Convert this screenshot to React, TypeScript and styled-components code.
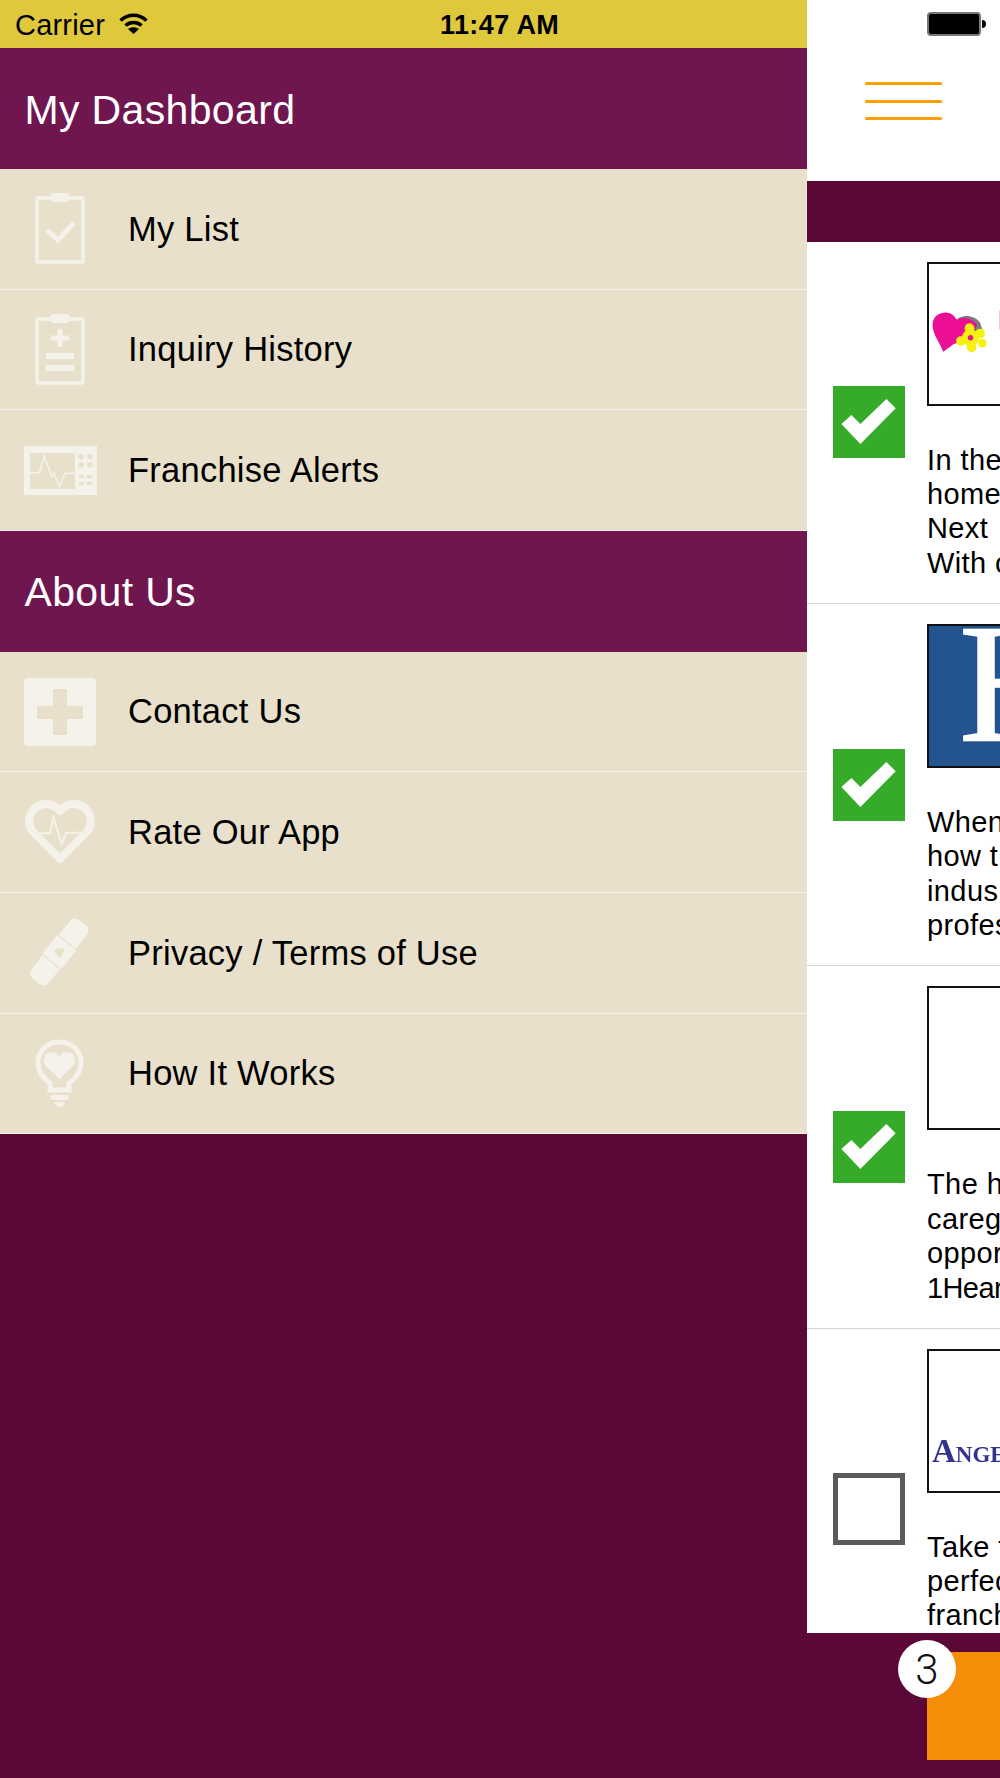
import React, { ReactElement } from "react";
import styled, { createGlobalStyle } from "styled-components";

const ICON = "#f5f2ec";

const GlobalStyle = createGlobalStyle`
	html, body {
		margin: 0;
		padding: 0;
		background: #5b0837;
		font-family: "Liberation Sans", Arial, sans-serif;
	}
`;

// menu icons are all drawn on the same 74x74 box so they line up in the column
const ClipboardFrame = () => (
	<>
		<rect x="13" y="6" width="46" height="64" rx="1.5" fill="none" stroke={ICON} strokeWidth="3.5" />
		<rect x="27" y="1" width="18" height="9" rx="2" fill={ICON} />
	</>
);

const ListIcon = () => (
	<MenuSvg viewBox="0 0 74 74">
		<ClipboardFrame />
		<path d="M23 38 L34 48 L50 31" fill="none" stroke={ICON} strokeWidth="5" />
	</MenuSvg>
);

const HistoryIcon = () => (
	<MenuSvg viewBox="0 0 74 74">
		<ClipboardFrame />
		<path d="M27 22.5 H45 V27.5 H27 Z M33.5 16 H38.5 V34 H33.5 Z" fill={ICON} />
		<rect x="22" y="40" width="28" height="6" fill={ICON} />
		<rect x="22" y="52" width="28" height="6" fill={ICON} />
	</MenuSvg>
);

const MonitorIcon = () => (
	<MenuSvg viewBox="0 0 74 74">
		<path fillRule="evenodd" fill={ICON} d="M0 12 H73 V61 H0 Z M6 19 V55 H51 V19 Z" />
		<path
			d="M6 38.7 H15.3 L20.3 22 L27.7 42.7 L30 39 L35.3 52.7 L41 39.3 H51"
			fill="none"
			stroke={ICON}
			strokeWidth="1.6"
		/>
		<circle cx="57" cy="22.7" r="2.7" fill="#e8e0cb" />
		<circle cx="66" cy="22.7" r="2.7" fill="#e8e0cb" />
		<circle cx="57" cy="31" r="2.7" fill="#e8e0cb" />
		<circle cx="66" cy="31" r="2.7" fill="#e8e0cb" />
		<path
			d="M55 41 H60 V44.3 H55 Z M62.7 41 H68.3 V44.3 H62.7 Z M55 47.7 H60 V51 H55 Z M62.7 47.7 H68.3 V51 H62.7 Z"
			fill="#e8e0cb"
		/>
	</MenuSvg>
);

const CrossIcon = () => (
	<MenuSvg viewBox="0 0 74 74">
		<path
			fillRule="evenodd"
			fill={ICON}
			d="M4 3 H68 Q72 3 72 7 V67 Q72 71 68 71 H4 Q0 71 0 67 V7 Q0 3 4 3 Z M29 14 V31 H13 V44 H29 V60 H43 V44 H59 V31 H43 V14 Z"
		/>
	</MenuSvg>
);

const HeartIcon = () => (
	<MenuSvg viewBox="0 0 74 74">
		<path
			d="M36 63 L8.500 35.500 A17 17 0 0 1 36 15 A17 17 0 0 1 63.500 35.500 Z"
			fill="none"
			stroke={ICON}
			strokeWidth="8"
			strokeLinejoin="round"
		/>
		<path
			d="M11 37.300 H26 L29.300 21.300 L37.700 48 L42 36.700 H61"
			fill="none"
			stroke={ICON}
			strokeWidth="2"
		/>
	</MenuSvg>
);

const BandageIcon = () => (
	<MenuSvg viewBox="0 0 74 74">
		<g transform="rotate(38.5 35.3 36)">
			<rect x="24.3" y="-1.5" width="22" height="75" rx="7" fill={ICON} />
			<rect x="23" y="23.5" width="24.6" height="25" fill={ICON} />
			<path d="M23 23.5 H47.6 M23 48.5 H47.6" stroke="#e8e0cb" strokeWidth="1.2" />
		</g>
		<path d="M35.3 42 L31 36 Q31 32 33.5 32 Q35 32 35.5 33.5 Q36 32 37.5 32 Q40 32 40 36 Z" fill="#e8e0cb" />
	</MenuSvg>
);

const BulbIcon = () => (
	<MenuSvg viewBox="0 0 74 74">
		<path
			d="M26 53 V46 C20 42 14 35 14 26 C14 13 24 5 35.5 5 C47 5 57 13 57 26 C57 35 51 42 45 46 V53 Z"
			fill="none"
			stroke={ICON}
			strokeWidth="5"
		/>
		<path
			d="M35.5 42 L22 29 C17 23 21 15 28 15 C31.500 15 34 17 35.500 20 C37 17 39.500 15 43 15 C50 15 54 23 49 29 Z"
			fill={ICON}
		/>
		<path d="M26 58 H45 L43.500 63 H27.500 Z" fill={ICON} />
		<path d="M30 65 H41 C40 68.500 38 70 35.500 70 C33 70 31 68.500 30 65 Z" fill={ICON} />
	</MenuSvg>
);

const CheckMark = () => (
	<svg width="72" height="72" viewBox="0 0 72 72">
		<polygon points="8.400,38 18.400,29 27.400,38 53.400,13 62.700,22.300 27.400,58" fill="#fff" />
	</svg>
);

const WifiIcon = () => (
	<svg width="29" height="21" viewBox="0 0 29 21">
		<path d="M1.500 7.500 C9 0.500 20 0.500 27.500 7.500" fill="none" stroke="#000" strokeWidth="3.500" />
		<path d="M6.500 12.500 C11 8.500 18 8.500 22.500 12.500" fill="none" stroke="#000" strokeWidth="3.500" />
		<path d="M9 16 C12.500 13.800 16.500 13.800 20 16 L14.500 21 Z" fill="#000" />
	</svg>
);

const HeartFlowerLogo = () => (
	<svg width="60" height="47" viewBox="0 0 56 44">
		<path
			d="M24 8 C30 4 40 5 45 12 L47 18 L36 26 L22 20 Z"
			fill="#5a5a5a"
			opacity="0.8"
		/>
		<path
			d="M10.500 39 C7 30 0 22 0.500 13 C1 5 8 2 14 2.500 C19 3 21 6 23 9 C29 6 38 7 42 14 L36 26 L20 32 Z"
			fill="#ec0f93"
		/>
		<g fill="#f6f010">
			<circle cx="35" cy="17" r="4.500" />
			<circle cx="45" cy="22" r="4.500" />
			<circle cx="47" cy="31" r="4" />
			<circle cx="37" cy="35" r="4.500" />
			<circle cx="27" cy="29" r="4.500" />
			<circle cx="36" cy="26" r="8" />
		</g>
		<circle cx="36" cy="26" r="2.500" fill="#ec0f93" />
	</svg>
);

export default function App(): ReactElement {
	return (
		<Page>
			<GlobalStyle />
			<Drawer>
				<StatusBar>
					<CarrierGroup>
						<span>Carrier</span>
						<WifiIcon />
					</CarrierGroup>
					<Clock>11:47 AM</Clock>
				</StatusBar>
				<SectionHeader>My Dashboard</SectionHeader>
				<MenuRow>
					<IconCell>
						<ListIcon />
					</IconCell>
					My List
				</MenuRow>
				<MenuRow>
					<IconCell>
						<HistoryIcon />
					</IconCell>
					Inquiry History
				</MenuRow>
				<MenuRow>
					<IconCell>
						<MonitorIcon />
					</IconCell>
					Franchise Alerts
				</MenuRow>
				<SectionHeader>About Us</SectionHeader>
				<MenuRow>
					<IconCell>
						<CrossIcon />
					</IconCell>
					Contact Us
				</MenuRow>
				<MenuRow>
					<IconCell>
						<HeartIcon />
					</IconCell>
					Rate Our App
				</MenuRow>
				<MenuRow>
					<IconCell>
						<BandageIcon />
					</IconCell>
					Privacy / Terms of Use
				</MenuRow>
				<MenuRow>
					<IconCell>
						<BulbIcon />
					</IconCell>
					How It Works
				</MenuRow>
			</Drawer>
			<Main>
				<Panel>
					<BatteryBar>
						<Battery />
						<BatteryNub />
					</BatteryBar>
					<NavBar>
						<Hamburger>
							<span />
							<span />
							<span />
						</Hamburger>
					</NavBar>
					<TitleBand />
					<Cell>
						<CheckBox $checked>
							<CheckMark />
						</CheckBox>
						<CellBody>
							<LogoFrame>
								<HeartSlot>
									<HeartFlowerLogo />
								</HeartSlot>
								<LogoSliver />
							</LogoFrame>
							<Blurb>
								<div>In the</div>
								<div>home</div>
								<div>Next</div>
								<div>With c</div>
							</Blurb>
						</CellBody>
					</Cell>
					<Cell>
						<CheckBox $checked>
							<CheckMark />
						</CheckBox>
						<CellBody>
							<BlueLogo>
								<LogoLetter>H</LogoLetter>
							</BlueLogo>
							<Blurb>
								<div>When</div>
								<div>how t</div>
								<div>indus</div>
								<div>profes</div>
							</Blurb>
						</CellBody>
					</Cell>
					<Cell>
						<CheckBox $checked>
							<CheckMark />
						</CheckBox>
						<CellBody>
							<LogoFrame />
							<Blurb>
								<div>The h</div>
								<div>careg</div>
								<div>oppor</div>
								<TightLine>1Hear</TightLine>
							</Blurb>
						</CellBody>
					</Cell>
					<Cell>
						<CheckBox />
						<CellBody>
							<LogoFrame>
								<AngelName>Angel</AngelName>
							</LogoFrame>
							<Blurb>
								<div>Take f</div>
								<div>perfec</div>
								<div>franch</div>
							</Blurb>
						</CellBody>
					</Cell>
				</Panel>
				<Footer>
					<OrangeButton>
						<Badge>3</Badge>
					</OrangeButton>
				</Footer>
			</Main>
		</Page>
	);
}

const Page = styled.div`
	display: flex;
	width: 1000px;
	height: 1778px;
	overflow: hidden;
	background: #5b0837;
`;
const Drawer = styled.div`
	width: 807px;
	flex-shrink: 0;
	display: flex;
	flex-direction: column;
`;
const StatusBar = styled.div`
	height: 48.330px;
	box-sizing: border-box;
	padding-top: 2px;
	flex-shrink: 0;
	display: flex;
	align-items: center;
	background: #dfc83c;
	color: #000;
`;
const CarrierGroup = styled.div`
	width: 425px;
	padding-left: 15px;
	display: flex;
	align-items: center;
	gap: 14px;
	font-size: 29px;
	letter-spacing: 0.2px;
	svg {
		margin-top: -3px;
	}
`;
const Clock = styled.span`
	font-size: 27px;
	font-weight: bold;
	letter-spacing: 0.4px;
`;
const SectionHeader = styled.div`
	height: 120.67px;
	flex-shrink: 0;
	box-sizing: border-box;
	padding: 3px 0 0 24.500px;
	display: flex;
	align-items: center;
	background: #6f164f;
	color: #fff;
	font-size: 41px;
	letter-spacing: 0.35px;
`;
const MenuRow = styled.div`
	height: 120.67px;
	flex-shrink: 0;
	box-sizing: border-box;
	padding-top: 1px;
	display: flex;
	align-items: center;
	background: #e8e0cb;
	border-bottom: 1px solid #f5f2ec;
	color: #000;
	font-size: 34.5px;
	letter-spacing: 0.25px;
`;
const IconCell = styled.div`
	width: 128px;
	padding-right: 6px;
	box-sizing: border-box;
	display: flex;
	justify-content: center;
`;
const MenuSvg = styled.svg`
	width: 74px;
	height: 74px;
	display: block;
`;
const Main = styled.div`
	flex: 1;
	min-width: 0;
	display: flex;
	flex-direction: column;
`;
const Panel = styled.div`
	height: 1633px;
	flex-shrink: 0;
	overflow: hidden;
	background: #fff;
`;
const BatteryBar = styled.div`
	height: 48px;
	padding: 1px 14px 0 120px;
	box-sizing: border-box;
	display: flex;
	align-items: center;
`;
const Battery = styled.div`
	width: 51px;
	height: 20px;
	margin-top: -1px;
	background: #000;
	border: 2px solid #777;
	border-radius: 4px;
`;
const BatteryNub = styled.div`
	width: 4px;
	height: 8px;
	margin: -1px 0 0 1px;
	background: #000;
	border-radius: 0 4px 4px 0;
`;
const NavBar = styled.div`
	height: 133px;
	box-sizing: border-box;
	padding: 34px 0 0 58px;
`;
const Hamburger = styled.div`
	width: 77px;
	display: flex;
	flex-direction: column;
	gap: 14.500px;
	span {
		display: block;
		height: 3px;
		background: #ffa000;
		border-radius: 2px;
	}
`;
const TitleBand = styled.div`
	height: 60.500px;
	background: #5b0837;
`;
const Cell = styled.div`
	height: 362.400px;
	box-sizing: border-box;
	display: flex;
	align-items: center;
	padding-left: 26px;
	border-bottom: 1px solid #d4d4d4;
`;
const CheckBox = styled.div<{ $checked?: boolean }>`
	width: 72px;
	height: 72px;
	flex-shrink: 0;
	box-sizing: border-box;
	background: ${(p) => (p.$checked ? "#36ab2a" : "#fff")};
	border: ${(p) => (p.$checked ? "none" : "5px solid #5a5a5a")};
	svg {
		display: block;
	}
`;
const CellBody = styled.div`
	align-self: flex-start;
	flex: 1;
	min-width: 0;
	margin-left: 22px;
	padding-top: 20px;
	overflow: hidden;
`;
const LogoFrame = styled.div`
	position: relative;
	width: 300px;
	height: 144px;
	box-sizing: border-box;
	border: 2px solid #111;
	background: #fff;
	display: flex;
	align-items: flex-end;
`;
const HeartSlot = styled.div`
	align-self: center;
	padding-left: 3px;
	filter: blur(0.5px);
	svg {
		display: block;
	}
`;
const LogoSliver = styled.div`
	position: absolute;
	left: 69.500px;
	top: 46px;
	width: 10px;
	height: 20px;
	background: #f7c6e0;
`;
const BlueLogo = styled(LogoFrame)`
	background: #24548f;
	overflow: hidden;
	align-items: center;
`;
const LogoLetter = styled.span`
	padding: 0 0 24px 30px;
	color: #fff;
	font-family: "Liberation Serif", "Times New Roman", serif;
	font-size: 169px;
	line-height: 1;
	-webkit-text-stroke: 1.500px #fff;
`;
const AngelName = styled.span`
	padding: 0 0 21px 3px;
	color: #33338c;
	font-family: "Liberation Serif", "Times New Roman", serif;
	font-size: 33px;
	font-weight: bold;
	font-variant: small-caps;
	line-height: 1.100;
	filter: blur(0.6px);
`;
const Blurb = styled.div`
	margin-top: 37px;
	color: #000;
	font-size: 29px;
	line-height: 34.400px;
	letter-spacing: 0.4px;
	white-space: nowrap;
`;
const TightLine = styled.div`
	letter-spacing: -0.6px;
`;
const Footer = styled.div`
	flex: 1;
	padding: 19px 0 0 120px;
`;
const OrangeButton = styled.div`
	position: relative;
	height: 108px;
	background: #f58e09;
`;
const Badge = styled.div`
	position: absolute;
	left: -29px;
	top: -12px;
	width: 58px;
	height: 58px;
	display: flex;
	align-items: center;
	justify-content: center;
	border-radius: 50%;
	background: #fff;
	color: #111;
	font-family: Roboto, sans-serif;
	font-size: 42px;
	font-weight: 300;
`;
